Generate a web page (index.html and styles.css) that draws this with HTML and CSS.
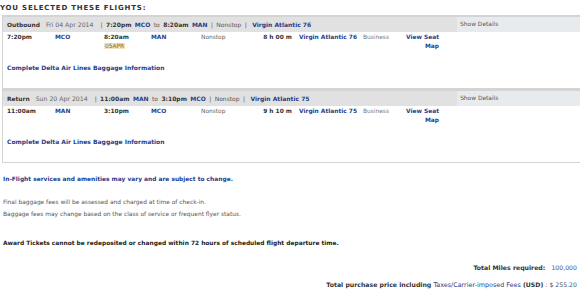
FILE: index.html
```html
<!DOCTYPE html>
<html lang="en">
<head>
    <meta charset="UTF-8">
    <title>Selected Flights</title>
    <link rel="stylesheet" href="styles.css">
</head>
<body>
    <h2 class="title">YOU SELECTED THESE FLIGHTS:</h2>

    <table class="flight">
        <colgroup>
            <col class="w-dep"><col class="w-apt"><col class="w-arr"><col class="w-apt2"><col class="w-stop">
            <col class="w-dur"><col class="w-fl"><col class="w-cab"><col class="w-seat"><col class="w-gap"><col class="w-det">
        </colgroup>
        <tr class="head">
            <td colspan="10" class="summary">
                <b>Outbound</b><span class="date">Fri 04 Apr 2014</span><span class="route"><span class="plain">|</span> <b>7:20pm</b> <a href="#">MCO</a> <span class="plain">to</span> <b>8:20am</b> <a href="#">MAN</a> <span class="plain">| Nonstop |</span> <a href="#" class="fl">Virgin Atlantic 76</a></span>
            </td>
            <td class="details">Show Details</td>
        </tr>
        <tr class="seg">
            <td class="c-dep">7:20pm</td>
            <td class="c-apt"><a href="#">MCO</a></td>
            <td class="c-arr">8:20am<br><span class="next">05APR</span></td>
            <td class="c-apt"><a href="#">MAN</a></td>
            <td class="c-stop">Nonstop</td>
            <td class="c-dur">8 h 00 m</td>
            <td class="c-fl"><a href="#">Virgin Atlantic 76</a></td>
            <td class="c-cab">Business</td>
            <td class="c-seat"><a href="#">View Seat<br>Map</a></td>
            <td colspan="2"></td>
        </tr>
        <tr class="bag">
            <td colspan="11"><a href="#">Complete Delta Air Lines Baggage Information</a></td>
        </tr>
    </table>

    <table class="flight">
        <colgroup>
            <col class="w-dep"><col class="w-apt"><col class="w-arr"><col class="w-apt2"><col class="w-stop">
            <col class="w-dur"><col class="w-fl"><col class="w-cab"><col class="w-seat"><col class="w-gap"><col class="w-det">
        </colgroup>
        <tr class="head">
            <td colspan="10" class="summary">
                <b>Return</b><span class="date">Sun 20 Apr 2014</span><span class="route"><span class="plain">|</span> <b>11:00am</b> <a href="#">MAN</a> <span class="plain">to</span> <b>3:10pm</b> <a href="#">MCO</a> <span class="plain">| Nonstop |</span> <a href="#" class="fl">Virgin Atlantic 75</a></span>
            </td>
            <td class="details">Show Details</td>
        </tr>
        <tr class="seg">
            <td class="c-dep">11:00am</td>
            <td class="c-apt"><a href="#">MAN</a></td>
            <td class="c-arr">3:10pm</td>
            <td class="c-apt"><a href="#">MCO</a></td>
            <td class="c-stop">Nonstop</td>
            <td class="c-dur">9 h 10 m</td>
            <td class="c-fl"><a href="#">Virgin Atlantic 75</a></td>
            <td class="c-cab">Business</td>
            <td class="c-seat"><a href="#">View Seat<br>Map</a></td>
            <td colspan="2"></td>
        </tr>
        <tr class="bag">
            <td colspan="11"><a href="#">Complete Delta Air Lines Baggage Information</a></td>
        </tr>
    </table>

    <p class="note-blue">In-Flight services and amenities may vary and are subject to change.</p>

    <p class="note-gray">Final baggage fees will be assessed and charged at time of check-in.<br>
    Baggage fees may change based on the class of service or frequent flyer status.</p>

    <p class="note-dark">Award Tickets cannot be redeposited or changed within 72 hours of scheduled flight departure time.</p>

    <div class="totals">
        <div class="miles">Total Miles required: <span class="val">100,000</span></div>
        <div class="price">Total purchase price including <a href="#">Taxes/Carrier-imposed Fees</a> (USD) <span class="val">: $ 255.20</span></div>
    </div>
</body>
</html>
```

FILE: styles.css
```css
body { margin: 0; padding: 4px 3px 0 0; font-family: "DejaVu Sans", Verdana, sans-serif; font-size: 5.9px; color: #333; width: 577px; height: 286px; overflow: hidden; }
a { color: #1f3d8a; text-decoration: none; font-weight: bold; }

.title { margin: 0; font-size: 7px; font-weight: bold; letter-spacing: 0.8px; line-height: 8px; color: #333; }

.flight { margin: 3px 0 0 2px; width: 599px; table-layout: fixed; border-collapse: separate; border-spacing: 0; border: 1px solid #d4d4d4; border-top-width: 2px; }
.flight + .flight { margin-top: 0; }
.flight td { padding: 0; vertical-align: top; line-height: 9px; white-space: nowrap; }

.w-dep { width: 52px; }
.w-apt { width: 49px; }
.w-arr { width: 47px; }
.w-apt2 { width: 50px; }
.w-stop { width: 39px; }
.w-dur { width: 59px; }
.w-fl { width: 63px; }
.w-cab { width: 38px; }
.w-seat { width: 39px; }
.w-gap { width: 18px; }
.w-det { width: 143px; }

.head td { background: #e1e1e1; height: 15px; vertical-align: middle; }
.head .summary { padding-left: 4px; }
.head b { color: #333; }
.head .summary > b { margin-right: 6px; }
.head .date { color: #666; margin-right: 7px; font-size: 6.2px; }
.head .route { font-size: 6px; word-spacing: 1.5px; }
.head .route .fl { word-spacing: 0; margin-left: 2px; }
.head .plain { color: #555; }
.head .details { background: #e7ebee; padding-left: 3px; color: #555; }

.seg td { height: 21px; padding-top: 1px; color: #333; font-weight: bold; }
.seg .c-dep { padding-left: 4px; }
.seg .c-stop { color: #666; font-weight: normal; }
.seg .c-dur { text-align: right; padding-right: 7px; }
.seg .c-cab { color: #777; font-weight: normal; padding-left: 1px; }
.seg .c-seat { text-align: right; }
.next { background: #f3e3c3; color: #8a6a2a; font-weight: normal; padding: 0 1px; }

.bag td { height: 25px; padding: 9px 0 0 4px; line-height: 10px; }
.bag a { font-size: 6px; }

.note-blue { margin: 11px 0 0 3px; color: #1f3d8a; font-weight: bold; line-height: 10px; }
.note-gray { margin: 12px 0 0 3px; color: #555; line-height: 12px; }
.note-dark { margin: 18px 0 0 3px; color: #222; font-weight: bold; line-height: 10px; }

.totals { margin-top: 15px; text-align: right; font-weight: bold; font-size: 6.2px; }
.totals .miles { line-height: 10px; }
.totals .price { margin-top: 7px; line-height: 10px; }
.totals .price a { font-weight: normal; font-size: 6.4px; }
.totals .val { font-weight: normal; color: #555; margin-left: 4px; }
.totals .price .val { margin-left: 0; }
```
